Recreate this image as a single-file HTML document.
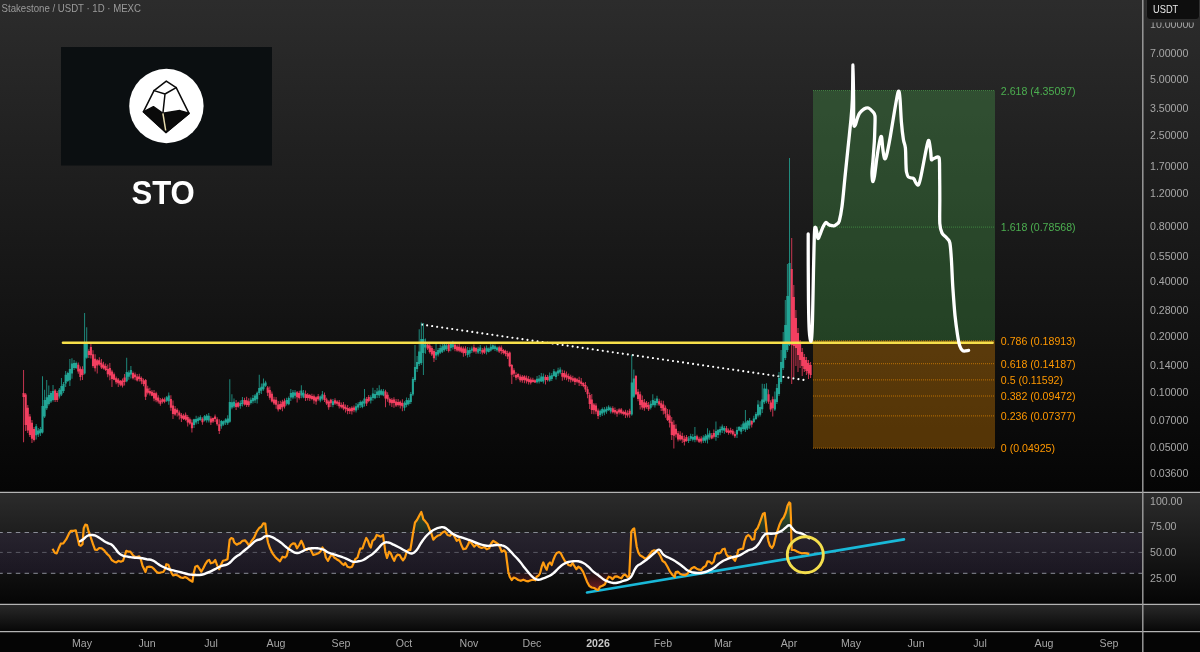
<!DOCTYPE html>
<html><head><meta charset="utf-8"><title>STO chart</title>
<style>html,body{margin:0;padding:0;background:#050505;overflow:hidden}svg{display:block;will-change:transform}svg text{-webkit-font-smoothing:antialiased}</style></head>
<body>
<svg width="1200" height="652" viewBox="0 0 1200 652" font-family="'Liberation Sans', sans-serif">
<defs>
<linearGradient id="gm" x1="0" y1="0" x2="0" y2="1"><stop offset="0" stop-color="#2c2c2c"/><stop offset="1" stop-color="#050505"/></linearGradient>
<linearGradient id="gr" x1="0" y1="0" x2="0" y2="1"><stop offset="0" stop-color="#2c2c2c"/><stop offset="1" stop-color="#050505"/></linearGradient>
<linearGradient id="g3" x1="0" y1="0" x2="0" y2="1"><stop offset="0" stop-color="#2a2a2a"/><stop offset="1" stop-color="#060606"/></linearGradient>
<linearGradient id="gob" gradientUnits="userSpaceOnUse" x1="0" y1="500" x2="0" y2="532.5"><stop offset="0" stop-color="#3a7d3c" stop-opacity="0.85"/><stop offset="1" stop-color="#2f6b32" stop-opacity="0.15"/></linearGradient>
<linearGradient id="gos" gradientUnits="userSpaceOnUse" x1="0" y1="573" x2="0" y2="592"><stop offset="0" stop-color="#7a1f25" stop-opacity="0.15"/><stop offset="1" stop-color="#9a262e" stop-opacity="0.85"/></linearGradient>
<linearGradient id="gband" gradientUnits="userSpaceOnUse" x1="0" y1="532.5" x2="0" y2="573"><stop offset="0" stop-color="#7e57c2" stop-opacity="0.10"/><stop offset="1" stop-color="#7e57c2" stop-opacity="0.10"/></linearGradient>
<clipPath id="cpTop"><rect x="1144" y="22.5" width="56" height="30"/></clipPath>
<clipPath id="above70"><rect x="0" y="493" width="1142" height="39.5"/></clipPath>
<clipPath id="below30"><rect x="0" y="573" width="1142" height="31"/></clipPath>
</defs>
<rect x="0" y="0" width="1200" height="492" fill="url(#gm)"/>
<rect x="0" y="492" width="1200" height="112" fill="url(#gr)"/>
<rect x="0" y="604" width="1200" height="28" fill="url(#g3)"/>
<rect x="0" y="632" width="1200" height="20" fill="#050505"/>
<rect x="813" y="90.5" width="182" height="250.3" fill="#4caf50" fill-opacity="0.31"/>
<rect x="813" y="340.8" width="182" height="107.4" fill="#ff9800" fill-opacity="0.31"/>
<line x1="813" x2="995" y1="90.5" y2="90.5" stroke="#4caf50" stroke-width="1" stroke-dasharray="1 1" stroke-opacity="0.6"/>
<text x="1000.8" y="94.56" font-size="10.6" fill="#4caf50">2.618 (4.35097)</text>
<line x1="813" x2="995" y1="227.1" y2="227.1" stroke="#4caf50" stroke-width="1" stroke-dasharray="1 1" stroke-opacity="0.6"/>
<text x="1000.8" y="231.20" font-size="10.6" fill="#4caf50">1.618 (0.78568)</text>
<line x1="813" x2="995" y1="340.8" y2="340.8" stroke="#ff9800" stroke-width="1" stroke-dasharray="1 1" stroke-opacity="0.6"/>
<text x="1000.8" y="344.88" font-size="10.6" fill="#ff9800">0.786 (0.18913)</text>
<line x1="813" x2="995" y1="363.7" y2="363.7" stroke="#ff9800" stroke-width="1" stroke-dasharray="1 1" stroke-opacity="0.6"/>
<text x="1000.8" y="367.84" font-size="10.6" fill="#ff9800">0.618 (0.14187)</text>
<line x1="813" x2="995" y1="379.9" y2="379.9" stroke="#ff9800" stroke-width="1" stroke-dasharray="1 1" stroke-opacity="0.6"/>
<text x="1000.8" y="383.96" font-size="10.6" fill="#ff9800">0.5 (0.11592)</text>
<line x1="813" x2="995" y1="396.0" y2="396.0" stroke="#ff9800" stroke-width="1" stroke-dasharray="1 1" stroke-opacity="0.6"/>
<text x="1000.8" y="400.09" font-size="10.6" fill="#ff9800">0.382 (0.09472)</text>
<line x1="813" x2="995" y1="415.9" y2="415.9" stroke="#ff9800" stroke-width="1" stroke-dasharray="1 1" stroke-opacity="0.6"/>
<text x="1000.8" y="420.04" font-size="10.6" fill="#ff9800">0.236 (0.07377)</text>
<line x1="813" x2="995" y1="448.2" y2="448.2" stroke="#ff9800" stroke-width="1" stroke-dasharray="1 1" stroke-opacity="0.6"/>
<text x="1000.8" y="452.30" font-size="10.6" fill="#ff9800">0 (0.04925)</text>
<line x1="422.1" y1="324.6" x2="808" y2="380.5" stroke="#ffffff" stroke-width="2.1" stroke-linecap="round" stroke-dasharray="0.01 5.06"/>
<path d="M35.69 424.0h1v15.5h-1zM37.79 428.0h1v9.0h-1zM39.90 427.0h1v9.0h-1zM42.00 376.3h1v57.2h-1zM44.11 389.7h1v28.3h-1zM46.21 380.0h1v30.0h-1zM48.31 385.5h1v20.0h-1zM50.42 391.0h1v12.0h-1zM52.52 385.0h1v16.5h-1zM58.84 388.0h1v10.5h-1zM60.94 378.0h1v18.0h-1zM63.05 382.0h1v11.0h-1zM65.15 371.1h1v16.0h-1zM67.25 371.8h1v10.1h-1zM69.36 359.1h1v26.9h-1zM71.46 358.3h1v20.4h-1zM73.57 359.9h1v10.1h-1zM75.67 361.4h1v7.5h-1zM84.09 312.9h1v61.5h-1zM86.20 327.3h1v31.5h-1zM126.18 357.8h1v24.5h-1zM128.29 370.4h1v9.3h-1zM130.39 366.1h1v12.3h-1zM166.17 395.9h1v6.2h-1zM168.27 392.4h1v12.3h-1zM193.52 418.7h1v9.3h-1zM195.63 415.8h1v8.7h-1zM197.73 416.5h1v7.4h-1zM199.84 415.3h1v5.5h-1zM204.05 415.1h1v6.4h-1zM206.15 414.1h1v8.5h-1zM208.26 413.0h1v9.5h-1zM220.88 420.0h1v8.8h-1zM222.99 420.5h1v5.3h-1zM225.09 418.2h1v6.7h-1zM227.20 415.3h1v9.6h-1zM229.30 379.2h1v43.5h-1zM231.41 394.3h1v15.0h-1zM233.51 398.6h1v9.4h-1zM239.82 400.5h1v8.3h-1zM241.93 396.9h1v9.5h-1zM250.35 397.5h1v7.1h-1zM252.45 394.9h1v8.6h-1zM254.56 393.9h1v9.2h-1zM256.66 391.6h1v11.8h-1zM258.76 374.7h1v20.3h-1zM260.87 383.6h1v10.5h-1zM262.97 378.6h1v12.2h-1zM265.08 380.8h1v6.1h-1zM286.12 397.7h1v7.7h-1zM288.23 396.5h1v8.8h-1zM290.33 389.1h1v11.9h-1zM292.44 390.0h1v9.3h-1zM294.54 390.0h1v8.4h-1zM300.85 385.2h1v13.1h-1zM302.96 389.9h1v8.3h-1zM319.79 395.6h1v6.7h-1zM321.90 391.0h1v9.4h-1zM332.42 398.9h1v8.3h-1zM355.57 403.1h1v9.3h-1zM357.68 402.3h1v7.4h-1zM359.78 400.6h1v7.4h-1zM361.88 400.5h1v7.7h-1zM363.99 389.1h1v17.4h-1zM370.30 395.2h1v8.3h-1zM372.41 387.8h1v13.0h-1zM374.51 390.1h1v9.1h-1zM376.62 388.1h1v9.8h-1zM378.72 385.2h1v12.9h-1zM380.82 389.0h1v6.6h-1zM382.93 389.1h1v7.2h-1zM403.97 401.3h1v9.4h-1zM406.08 397.6h1v9.6h-1zM408.18 397.9h1v7.6h-1zM410.29 392.0h1v12.0h-1zM412.39 377.0h1v19.0h-1zM414.50 345.0h1v37.0h-1zM416.60 356.0h1v16.0h-1zM418.71 329.3h1v36.7h-1zM420.81 322.4h1v42.6h-1zM422.91 323.0h1v52.0h-1zM425.02 338.5h1v15.2h-1zM435.54 342.6h1v17.4h-1zM437.65 348.0h1v8.5h-1zM439.75 344.5h1v9.5h-1zM441.86 343.5h1v9.5h-1zM443.96 342.5h1v9.0h-1zM446.06 343.0h1v8.0h-1zM450.27 342.7h1v8.6h-1zM452.38 340.8h1v8.7h-1zM467.11 346.9h1v10.5h-1zM469.21 347.6h1v9.3h-1zM471.32 346.6h1v6.5h-1zM477.63 346.8h1v7.1h-1zM479.74 344.9h1v9.0h-1zM486.05 345.6h1v8.8h-1zM488.15 347.6h1v5.0h-1zM490.26 344.0h1v7.5h-1zM492.36 344.2h1v5.8h-1zM494.47 344.6h1v6.5h-1zM496.57 346.6h1v5.2h-1zM536.56 376.0h1v7.6h-1zM538.66 375.1h1v8.3h-1zM540.77 372.9h1v9.1h-1zM542.87 373.6h1v10.0h-1zM549.18 372.5h1v9.3h-1zM551.29 373.0h1v7.9h-1zM553.39 368.9h1v7.8h-1zM555.50 371.0h1v8.5h-1zM557.60 367.7h1v8.4h-1zM559.71 367.2h1v7.0h-1zM599.69 409.4h1v7.6h-1zM601.80 407.5h1v8.5h-1zM603.90 406.9h1v8.3h-1zM606.01 406.6h1v7.2h-1zM608.11 405.3h1v5.7h-1zM610.22 406.6h1v6.8h-1zM631.26 354.7h1v61.0h-1zM633.36 369.5h1v28.4h-1zM650.20 400.7h1v8.7h-1zM652.31 394.3h1v12.1h-1zM654.41 398.5h1v9.0h-1zM656.51 395.7h1v9.7h-1zM688.08 436.2h1v6.9h-1zM690.19 433.8h1v7.1h-1zM692.29 434.0h1v7.6h-1zM694.40 426.9h1v15.3h-1zM702.81 435.3h1v7.8h-1zM704.92 433.9h1v8.9h-1zM707.02 428.2h1v15.2h-1zM709.13 430.6h1v9.1h-1zM715.44 421.6h1v19.2h-1zM717.54 428.9h1v9.2h-1zM719.65 426.5h1v8.7h-1zM721.75 424.5h1v8.4h-1zM723.86 426.0h1v7.7h-1zM736.49 426.7h1v11.2h-1zM738.59 426.1h1v5.1h-1zM740.69 424.4h1v9.9h-1zM742.80 421.2h1v9.8h-1zM744.90 409.9h1v22.0h-1zM747.01 419.9h1v10.2h-1zM749.11 418.1h1v10.7h-1zM753.32 415.8h1v7.2h-1zM755.43 412.0h1v8.1h-1zM757.53 400.2h1v17.4h-1zM759.64 401.2h1v15.3h-1zM761.74 383.8h1v29.2h-1zM763.84 384.0h1v20.0h-1zM765.95 383.3h1v19.9h-1zM774.37 391.6h1v19.3h-1zM776.40 384.0h1v20.0h-1zM778.50 372.0h1v24.0h-1zM780.60 350.0h1v34.0h-1zM782.70 332.0h1v38.0h-1zM784.80 300.0h1v60.0h-1zM786.90 264.0h1v88.0h-1zM789.00 158.0h1v188.0h-1z" fill="#22a595" fill-opacity="0.8"/>
<path d="M23.06 370.0h1v72.2h-1zM25.16 393.0h1v38.0h-1zM27.27 405.0h1v28.0h-1zM29.37 414.0h1v23.0h-1zM31.48 420.0h1v23.0h-1zM33.58 427.0h1v14.5h-1zM54.63 389.0h1v13.0h-1zM56.73 391.0h1v11.0h-1zM77.78 362.4h1v11.4h-1zM79.88 366.5h1v14.1h-1zM81.99 366.3h1v13.6h-1zM88.30 349.3h1v8.8h-1zM90.40 343.1h1v15.4h-1zM92.51 350.3h1v17.5h-1zM94.61 354.3h1v17.2h-1zM96.72 359.1h1v14.4h-1zM98.82 357.3h1v8.4h-1zM100.93 359.1h1v9.9h-1zM103.03 361.7h1v7.9h-1zM105.14 363.6h1v7.5h-1zM107.24 364.6h1v12.7h-1zM109.34 363.1h1v17.2h-1zM111.45 369.8h1v17.2h-1zM113.55 372.6h1v7.6h-1zM115.66 376.4h1v7.8h-1zM117.76 378.0h1v9.1h-1zM119.87 380.1h1v6.2h-1zM121.97 378.5h1v9.0h-1zM124.08 374.1h1v11.5h-1zM132.49 371.4h1v8.0h-1zM134.60 372.5h1v7.7h-1zM136.70 373.9h1v7.7h-1zM138.81 373.7h1v7.7h-1zM140.91 376.4h1v7.9h-1zM143.02 378.5h1v7.7h-1zM145.12 378.9h1v21.1h-1zM147.23 385.8h1v8.8h-1zM149.33 387.7h1v7.8h-1zM151.43 390.0h1v6.3h-1zM153.54 390.1h1v11.1h-1zM155.64 391.7h1v10.5h-1zM157.75 395.3h1v8.1h-1zM159.85 398.1h1v7.7h-1zM161.96 397.8h1v5.6h-1zM164.06 397.4h1v5.9h-1zM170.38 395.2h1v15.6h-1zM172.48 400.5h1v18.4h-1zM174.58 405.9h1v9.9h-1zM176.69 408.3h1v8.1h-1zM178.79 410.5h1v8.9h-1zM180.90 412.9h1v9.1h-1zM183.00 413.7h1v6.4h-1zM185.11 412.4h1v8.3h-1zM187.21 414.9h1v11.6h-1zM189.32 417.4h1v7.4h-1zM191.42 419.4h1v13.2h-1zM201.94 417.3h1v7.5h-1zM210.36 416.3h1v8.8h-1zM212.47 417.4h1v5.7h-1zM214.57 414.6h1v7.3h-1zM216.67 417.3h1v8.4h-1zM218.78 419.2h1v14.8h-1zM235.61 400.1h1v9.8h-1zM237.72 401.7h1v6.1h-1zM244.03 397.8h1v7.6h-1zM246.14 396.8h1v10.1h-1zM248.24 398.3h1v8.7h-1zM267.18 385.9h1v10.0h-1zM269.29 386.5h1v13.3h-1zM271.39 391.5h1v11.1h-1zM273.50 396.7h1v8.4h-1zM275.60 396.9h1v11.8h-1zM277.70 400.9h1v10.6h-1zM279.81 400.8h1v9.2h-1zM281.91 399.7h1v11.5h-1zM284.02 398.4h1v10.2h-1zM296.64 390.9h1v11.7h-1zM298.75 390.8h1v8.8h-1zM305.06 390.5h1v10.5h-1zM307.17 392.9h1v7.5h-1zM309.27 393.9h1v7.1h-1zM311.38 393.7h1v6.6h-1zM313.48 394.5h1v9.2h-1zM315.59 396.2h1v8.6h-1zM317.69 394.0h1v6.8h-1zM324.00 392.5h1v9.6h-1zM326.11 397.7h1v7.3h-1zM328.21 400.3h1v9.5h-1zM330.32 398.7h1v8.3h-1zM334.53 398.2h1v6.9h-1zM336.63 400.2h1v5.5h-1zM338.73 400.0h1v8.5h-1zM340.84 402.4h1v6.1h-1zM342.94 402.1h1v8.2h-1zM345.05 404.4h1v8.0h-1zM347.15 405.0h1v9.3h-1zM349.26 407.0h1v7.1h-1zM351.36 406.3h1v8.1h-1zM353.47 405.6h1v6.7h-1zM366.09 397.0h1v9.1h-1zM368.20 395.1h1v7.2h-1zM385.03 389.7h1v17.6h-1zM387.14 392.2h1v9.5h-1zM389.24 397.4h1v8.0h-1zM391.35 397.9h1v9.1h-1zM393.45 397.2h1v10.6h-1zM395.56 399.0h1v8.0h-1zM397.66 398.9h1v7.6h-1zM399.77 400.6h1v7.9h-1zM401.87 399.3h1v12.0h-1zM427.12 342.0h1v8.0h-1zM429.23 344.0h1v9.5h-1zM431.33 346.0h1v10.0h-1zM433.44 349.0h1v13.0h-1zM448.17 343.0h1v9.5h-1zM454.48 342.6h1v8.6h-1zM456.59 344.5h1v7.2h-1zM458.69 343.5h1v8.8h-1zM460.80 346.3h1v6.8h-1zM462.90 346.5h1v10.2h-1zM465.00 346.3h1v9.4h-1zM473.42 344.5h1v8.0h-1zM475.53 347.2h1v6.5h-1zM481.84 348.0h1v6.6h-1zM483.95 346.4h1v7.7h-1zM498.68 345.7h1v7.3h-1zM500.78 345.4h1v8.9h-1zM502.89 348.9h1v5.5h-1zM504.99 349.8h1v6.4h-1zM507.09 350.8h1v8.1h-1zM509.20 351.6h1v15.6h-1zM511.30 364.1h1v19.8h-1zM513.41 368.2h1v8.7h-1zM515.51 372.3h1v7.9h-1zM517.62 373.2h1v6.1h-1zM519.72 374.4h1v7.9h-1zM521.83 374.9h1v7.9h-1zM523.93 375.2h1v8.1h-1zM526.04 375.5h1v7.9h-1zM528.14 376.0h1v8.5h-1zM530.24 377.4h1v7.0h-1zM532.35 377.7h1v4.9h-1zM534.45 379.2h1v3.7h-1zM544.98 374.8h1v9.6h-1zM547.08 375.0h1v6.6h-1zM561.81 369.7h1v11.0h-1zM563.92 370.4h1v9.4h-1zM566.02 371.6h1v8.6h-1zM568.13 373.6h1v8.2h-1zM570.23 374.8h1v7.6h-1zM572.33 375.8h1v6.3h-1zM574.44 377.2h1v7.7h-1zM576.54 378.1h1v5.2h-1zM578.65 376.7h1v9.2h-1zM580.75 378.1h1v8.0h-1zM582.86 382.2h1v5.0h-1zM584.96 382.1h1v10.0h-1zM587.07 386.4h1v11.9h-1zM589.17 392.4h1v16.6h-1zM591.27 394.1h1v19.8h-1zM593.38 403.1h1v11.2h-1zM595.48 403.2h1v11.1h-1zM597.59 408.6h1v10.5h-1zM612.32 406.2h1v7.4h-1zM614.42 407.5h1v7.0h-1zM616.53 409.3h1v7.5h-1zM618.63 408.2h1v6.4h-1zM620.74 408.1h1v6.4h-1zM622.84 410.5h1v5.0h-1zM624.95 409.8h1v8.1h-1zM627.05 410.3h1v7.2h-1zM629.16 408.8h1v8.9h-1zM635.47 375.0h1v20.2h-1zM637.57 389.0h1v12.2h-1zM639.68 391.6h1v17.9h-1zM641.78 395.5h1v14.2h-1zM643.89 399.0h1v11.7h-1zM645.99 401.0h1v7.8h-1zM648.10 402.1h1v8.9h-1zM658.62 398.7h1v7.2h-1zM660.72 400.4h1v10.7h-1zM662.83 400.8h1v13.6h-1zM664.93 405.4h1v12.3h-1zM667.04 409.1h1v11.8h-1zM669.14 409.5h1v18.1h-1zM671.25 416.9h1v23.2h-1zM673.35 420.3h1v28.2h-1zM675.45 424.2h1v13.4h-1zM677.56 430.9h1v10.5h-1zM679.66 431.2h1v9.6h-1zM681.77 432.8h1v10.2h-1zM683.87 435.5h1v9.9h-1zM685.98 435.1h1v6.7h-1zM696.50 434.8h1v6.6h-1zM698.60 436.8h1v6.2h-1zM700.71 436.2h1v7.4h-1zM711.23 433.1h1v6.2h-1zM713.34 429.5h1v9.0h-1zM725.96 426.1h1v7.0h-1zM728.07 428.6h1v6.1h-1zM730.17 427.7h1v6.5h-1zM732.28 428.9h1v6.6h-1zM734.38 431.4h1v6.6h-1zM751.22 420.3h1v7.2h-1zM768.05 389.4h1v14.4h-1zM770.16 400.2h1v11.5h-1zM772.26 396.4h1v20.0h-1zM791.20 238.0h1v146.0h-1zM793.30 285.0h1v92.0h-1zM795.40 310.0h1v56.0h-1zM797.50 328.0h1v44.0h-1zM799.60 340.0h1v28.0h-1zM801.70 348.0h1v28.0h-1zM803.80 354.0h1v18.0h-1zM805.90 357.0h1v18.0h-1zM808.00 360.0h1v19.0h-1zM810.10 362.0h1v16.0h-1z" fill="#f23f60" fill-opacity="0.8"/>
<path d="M35.14 426.3h2.1v9.0h-2.1zM37.24 430.4h2.1v4.2h-2.1zM39.35 429.0h2.1v4.2h-2.1zM41.45 406.0h2.1v26.5h-2.1zM43.56 400.0h2.1v16.6h-2.1zM45.66 397.3h2.1v11.0h-2.1zM47.76 395.0h2.1v9.0h-2.1zM49.87 393.0h2.1v8.4h-2.1zM51.97 391.0h2.1v9.0h-2.1zM58.29 389.7h2.1v6.9h-2.1zM60.39 386.0h2.1v8.5h-2.1zM62.50 384.0h2.1v7.0h-2.1zM64.60 374.8h2.1v8.7h-2.1zM66.70 373.0h2.1v8.0h-2.1zM68.81 368.9h2.1v11.3h-2.1zM70.91 363.5h2.1v10.1h-2.1zM73.02 363.0h2.1v5.1h-2.1zM75.12 363.1h2.1v5.0h-2.1zM83.54 342.1h2.1v31.3h-2.1zM85.65 342.1h2.1v15.6h-2.1zM125.63 372.1h2.1v9.1h-2.1zM127.74 372.5h2.1v4.2h-2.1zM129.84 370.1h2.1v4.4h-2.1zM165.62 397.3h2.1v3.5h-2.1zM167.72 395.5h2.1v5.8h-2.1zM192.97 419.3h2.1v5.7h-2.1zM195.08 419.0h2.1v3.6h-2.1zM197.18 418.3h2.1v2.7h-2.1zM199.29 416.9h2.1v3.0h-2.1zM203.50 416.2h2.1v4.4h-2.1zM205.60 415.6h2.1v4.6h-2.1zM207.71 415.8h2.1v4.8h-2.1zM220.33 421.0h2.1v5.3h-2.1zM222.44 421.3h2.1v3.3h-2.1zM224.54 419.5h2.1v3.0h-2.1zM226.65 418.6h2.1v4.6h-2.1zM228.75 402.1h2.1v19.6h-2.1zM230.86 402.3h2.1v5.2h-2.1zM232.96 401.7h2.1v4.8h-2.1zM239.27 403.0h2.1v3.0h-2.1zM241.38 400.1h2.1v4.0h-2.1zM249.80 399.8h2.1v3.2h-2.1zM251.90 397.9h2.1v3.3h-2.1zM254.01 395.6h2.1v4.8h-2.1zM256.11 392.7h2.1v6.6h-2.1zM258.21 387.9h2.1v5.2h-2.1zM260.32 386.7h2.1v4.1h-2.1zM262.42 383.5h2.1v5.8h-2.1zM264.53 382.6h2.1v3.1h-2.1zM285.57 400.1h2.1v3.6h-2.1zM287.68 398.1h2.1v6.2h-2.1zM289.78 392.9h2.1v4.7h-2.1zM291.89 392.2h2.1v5.4h-2.1zM293.99 392.6h2.1v3.2h-2.1zM300.30 390.6h2.1v5.0h-2.1zM302.41 392.7h2.1v4.8h-2.1zM319.24 396.4h2.1v4.2h-2.1zM321.35 394.3h2.1v4.5h-2.1zM331.87 401.3h2.1v3.7h-2.1zM355.02 406.3h2.1v4.2h-2.1zM357.13 404.2h2.1v3.4h-2.1zM359.23 401.9h2.1v3.4h-2.1zM361.33 401.6h2.1v5.3h-2.1zM363.44 398.4h2.1v5.1h-2.1zM369.75 397.3h2.1v3.3h-2.1zM371.86 393.6h2.1v4.5h-2.1zM373.96 393.9h2.1v4.4h-2.1zM376.07 391.5h2.1v3.4h-2.1zM378.17 390.6h2.1v5.0h-2.1zM380.27 390.4h2.1v4.3h-2.1zM382.38 391.3h2.1v4.1h-2.1zM403.42 402.7h2.1v5.1h-2.1zM405.53 399.9h2.1v5.0h-2.1zM407.63 400.2h2.1v3.8h-2.1zM409.74 394.0h2.1v8.0h-2.1zM411.84 379.0h2.1v15.5h-2.1zM413.95 367.0h2.1v13.0h-2.1zM416.05 362.0h2.1v7.0h-2.1zM418.16 351.4h2.1v12.6h-2.1zM420.26 339.0h2.1v24.0h-2.1zM422.36 339.0h2.1v14.0h-2.1zM424.47 344.5h2.1v3.0h-2.1zM434.99 352.0h2.1v3.5h-2.1zM437.10 350.0h2.1v4.6h-2.1zM439.20 348.0h2.1v4.8h-2.1zM441.31 346.3h2.1v5.5h-2.1zM443.41 344.5h2.1v5.5h-2.1zM445.51 345.4h2.1v3.6h-2.1zM449.72 343.7h2.1v4.2h-2.1zM451.83 344.3h2.1v3.0h-2.1zM466.56 350.2h2.1v4.9h-2.1zM468.66 349.9h2.1v3.6h-2.1zM470.77 348.4h2.1v2.4h-2.1zM477.08 348.7h2.1v3.7h-2.1zM479.19 347.6h2.1v3.5h-2.1zM485.50 347.7h2.1v3.7h-2.1zM487.60 348.4h2.1v3.5h-2.1zM489.71 346.8h2.1v3.8h-2.1zM491.81 345.2h2.1v3.8h-2.1zM493.92 346.2h2.1v2.7h-2.1zM496.02 347.6h2.1v2.7h-2.1zM536.01 378.7h2.1v3.5h-2.1zM538.11 378.4h2.1v3.2h-2.1zM540.22 376.6h2.1v4.8h-2.1zM542.32 376.6h2.1v4.9h-2.1zM548.63 375.7h2.1v5.1h-2.1zM550.74 375.2h2.1v3.9h-2.1zM552.84 371.2h2.1v4.9h-2.1zM554.95 372.2h2.1v4.7h-2.1zM557.05 370.4h2.1v3.2h-2.1zM559.16 369.6h2.1v3.0h-2.1zM599.14 410.7h2.1v4.3h-2.1zM601.25 409.0h2.1v4.5h-2.1zM603.35 409.4h2.1v3.2h-2.1zM605.46 408.8h2.1v2.7h-2.1zM607.56 406.8h2.1v3.2h-2.1zM609.67 408.0h2.1v3.4h-2.1zM630.71 382.5h2.1v32.1h-2.1zM632.81 378.6h2.1v18.2h-2.1zM649.65 403.8h2.1v3.9h-2.1zM651.76 400.1h2.1v4.9h-2.1zM653.86 401.1h2.1v4.2h-2.1zM655.96 398.5h2.1v4.6h-2.1zM687.53 438.4h2.1v2.7h-2.1zM689.64 435.9h2.1v2.9h-2.1zM691.74 437.1h2.1v2.7h-2.1zM693.85 435.9h2.1v3.9h-2.1zM702.26 437.5h2.1v3.3h-2.1zM704.37 435.8h2.1v4.9h-2.1zM706.47 434.7h2.1v4.8h-2.1zM708.58 433.3h2.1v4.2h-2.1zM714.89 431.0h2.1v5.9h-2.1zM716.99 430.1h2.1v5.0h-2.1zM719.10 429.1h2.1v3.3h-2.1zM721.20 426.6h2.1v3.7h-2.1zM723.31 428.1h2.1v2.7h-2.1zM735.94 430.1h2.1v4.3h-2.1zM738.04 427.1h2.1v3.5h-2.1zM740.14 427.3h2.1v4.5h-2.1zM742.25 423.4h2.1v5.6h-2.1zM744.35 422.6h2.1v7.2h-2.1zM746.46 421.0h2.1v7.5h-2.1zM748.56 420.3h2.1v5.3h-2.1zM752.77 418.4h2.1v3.6h-2.1zM754.88 414.0h2.1v4.9h-2.1zM756.98 404.5h2.1v11.0h-2.1zM759.09 407.1h2.1v7.7h-2.1zM761.19 399.4h2.1v9.8h-2.1zM763.29 388.4h2.1v13.9h-2.1zM765.40 388.8h2.1v12.0h-2.1zM773.82 399.3h2.1v10.3h-2.1zM775.85 388.0h2.1v14.0h-2.1zM777.95 378.0h2.1v16.0h-2.1zM780.05 362.0h2.1v20.0h-2.1zM782.15 342.0h2.1v26.0h-2.1zM784.25 325.0h2.1v33.0h-2.1zM786.35 296.0h2.1v54.0h-2.1zM788.45 263.0h2.1v82.0h-2.1z" fill="#22a595"/>
<path d="M22.51 393.0h2.1v4.0h-2.1zM24.61 394.5h2.1v30.5h-2.1zM26.72 407.7h2.1v22.7h-2.1zM28.82 416.6h2.1v18.4h-2.1zM30.93 422.8h2.1v15.9h-2.1zM33.03 429.0h2.1v11.0h-2.1zM54.08 390.4h2.1v9.6h-2.1zM56.18 393.0h2.1v7.0h-2.1zM77.23 364.7h2.1v6.8h-2.1zM79.33 368.7h2.1v8.3h-2.1zM81.44 369.3h2.1v5.7h-2.1zM87.75 350.9h2.1v4.0h-2.1zM89.85 346.9h2.1v8.4h-2.1zM91.96 354.2h2.1v11.8h-2.1zM94.06 358.8h2.1v9.5h-2.1zM96.17 360.2h2.1v5.3h-2.1zM98.27 360.2h2.1v4.2h-2.1zM100.38 362.8h2.1v4.6h-2.1zM102.48 364.4h2.1v4.1h-2.1zM104.59 365.9h2.1v4.2h-2.1zM106.69 368.9h2.1v5.4h-2.1zM108.79 368.0h2.1v7.6h-2.1zM110.90 371.6h2.1v7.5h-2.1zM113.00 374.2h2.1v5.5h-2.1zM115.11 378.3h2.1v3.9h-2.1zM117.21 379.4h2.1v3.8h-2.1zM119.32 380.8h2.1v4.0h-2.1zM121.42 380.5h2.1v5.3h-2.1zM123.53 377.4h2.1v4.7h-2.1zM131.94 373.1h2.1v5.2h-2.1zM134.05 374.5h2.1v2.8h-2.1zM136.15 376.5h2.1v4.1h-2.1zM138.26 376.5h2.1v2.5h-2.1zM140.36 378.0h2.1v3.3h-2.1zM142.47 380.4h2.1v3.6h-2.1zM144.57 379.9h2.1v16.9h-2.1zM146.68 388.4h2.1v4.3h-2.1zM148.78 390.9h2.1v2.6h-2.1zM150.88 391.8h2.1v4.0h-2.1zM152.99 393.1h2.1v5.4h-2.1zM155.09 393.3h2.1v7.0h-2.1zM157.20 397.5h2.1v4.0h-2.1zM159.30 400.6h2.1v3.2h-2.1zM161.41 399.0h2.1v2.7h-2.1zM163.51 399.6h2.1v2.1h-2.1zM169.83 398.9h2.1v8.8h-2.1zM171.93 405.4h2.1v8.6h-2.1zM174.03 408.8h2.1v5.6h-2.1zM176.14 409.8h2.1v3.0h-2.1zM178.24 412.4h2.1v3.2h-2.1zM180.35 414.8h2.1v3.4h-2.1zM182.45 415.7h2.1v3.2h-2.1zM184.56 414.7h2.1v5.1h-2.1zM186.66 417.0h2.1v5.4h-2.1zM188.77 419.2h2.1v4.3h-2.1zM190.87 422.6h2.1v5.7h-2.1zM201.39 418.8h2.1v3.4h-2.1zM209.81 418.6h2.1v3.8h-2.1zM211.92 418.0h2.1v3.4h-2.1zM214.02 416.4h2.1v2.6h-2.1zM216.12 419.3h2.1v5.0h-2.1zM218.23 424.3h2.1v6.7h-2.1zM235.06 403.3h2.1v3.7h-2.1zM237.17 402.5h2.1v4.2h-2.1zM243.48 400.1h2.1v4.4h-2.1zM245.59 400.3h2.1v4.6h-2.1zM247.69 401.3h2.1v4.0h-2.1zM266.63 387.5h2.1v5.3h-2.1zM268.74 390.1h2.1v7.6h-2.1zM270.84 393.7h2.1v7.7h-2.1zM272.95 399.4h2.1v4.2h-2.1zM275.05 399.8h2.1v5.0h-2.1zM277.15 404.4h2.1v5.0h-2.1zM279.26 404.0h2.1v5.0h-2.1zM281.36 401.7h2.1v5.5h-2.1zM283.47 400.7h2.1v5.7h-2.1zM296.09 392.2h2.1v5.0h-2.1zM298.20 392.9h2.1v5.1h-2.1zM304.51 394.0h2.1v4.1h-2.1zM306.62 394.6h2.1v3.5h-2.1zM308.72 394.9h2.1v3.6h-2.1zM310.83 396.0h2.1v2.9h-2.1zM312.93 396.2h2.1v4.2h-2.1zM315.04 397.3h2.1v4.3h-2.1zM317.14 396.3h2.1v3.0h-2.1zM323.45 394.9h2.1v5.1h-2.1zM325.56 399.5h2.1v4.0h-2.1zM327.66 401.6h2.1v5.6h-2.1zM329.77 399.8h2.1v3.4h-2.1zM333.98 400.2h2.1v3.4h-2.1zM336.08 401.5h2.1v2.3h-2.1zM338.18 402.3h2.1v3.9h-2.1zM340.29 404.9h2.1v2.4h-2.1zM342.39 404.5h2.1v4.1h-2.1zM344.50 406.7h2.1v2.5h-2.1zM346.60 408.0h2.1v3.0h-2.1zM348.71 408.6h2.1v2.7h-2.1zM350.81 407.8h2.1v3.4h-2.1zM352.92 407.4h2.1v2.8h-2.1zM365.54 398.9h2.1v4.6h-2.1zM367.65 397.1h2.1v3.9h-2.1zM384.48 391.4h2.1v7.1h-2.1zM386.59 394.7h2.1v4.6h-2.1zM388.69 399.1h2.1v3.6h-2.1zM390.80 399.7h2.1v3.6h-2.1zM392.90 399.4h2.1v3.7h-2.1zM395.01 401.6h2.1v3.9h-2.1zM397.11 402.1h2.1v2.9h-2.1zM399.22 401.7h2.1v3.8h-2.1zM401.32 402.9h2.1v3.3h-2.1zM426.57 344.5h2.1v4.0h-2.1zM428.68 345.5h2.1v6.5h-2.1zM430.78 348.0h2.1v6.6h-2.1zM432.89 351.0h2.1v7.3h-2.1zM447.62 344.5h2.1v6.5h-2.1zM453.93 344.8h2.1v4.3h-2.1zM456.04 346.5h2.1v3.9h-2.1zM458.14 346.7h2.1v4.0h-2.1zM460.25 347.6h2.1v4.2h-2.1zM462.35 348.5h2.1v4.8h-2.1zM464.45 348.5h2.1v4.5h-2.1zM472.87 347.3h2.1v4.1h-2.1zM474.98 347.9h2.1v3.6h-2.1zM481.29 350.0h2.1v2.5h-2.1zM483.40 348.6h2.1v4.2h-2.1zM498.13 347.2h2.1v4.4h-2.1zM500.23 347.6h2.1v3.5h-2.1zM502.34 350.1h2.1v2.8h-2.1zM504.44 351.1h2.1v2.8h-2.1zM506.54 353.2h2.1v3.3h-2.1zM508.65 352.6h2.1v13.6h-2.1zM510.75 365.1h2.1v9.6h-2.1zM512.86 370.2h2.1v3.6h-2.1zM514.96 374.9h2.1v2.8h-2.1zM517.07 374.1h2.1v3.1h-2.1zM519.17 376.4h2.1v3.9h-2.1zM521.28 376.7h2.1v3.8h-2.1zM523.38 376.3h2.1v3.8h-2.1zM525.49 377.8h2.1v3.5h-2.1zM527.59 379.0h2.1v3.1h-2.1zM529.69 379.6h2.1v3.2h-2.1zM531.80 379.7h2.1v2.4h-2.1zM533.90 380.3h2.1v2.2h-2.1zM544.43 377.0h2.1v3.1h-2.1zM546.53 377.1h2.1v2.9h-2.1zM561.26 373.1h2.1v3.6h-2.1zM563.37 373.0h2.1v4.4h-2.1zM565.47 374.5h2.1v3.1h-2.1zM567.58 376.1h2.1v2.9h-2.1zM569.68 376.8h2.1v3.0h-2.1zM571.78 378.3h2.1v2.5h-2.1zM573.89 378.3h2.1v3.7h-2.1zM575.99 379.3h2.1v2.5h-2.1zM578.10 379.9h2.1v2.9h-2.1zM580.20 381.4h2.1v2.5h-2.1zM582.31 383.0h2.1v3.0h-2.1zM584.41 385.0h2.1v4.5h-2.1zM586.52 389.2h2.1v5.0h-2.1zM588.62 394.9h2.1v9.0h-2.1zM590.72 399.5h2.1v10.4h-2.1zM592.83 404.5h2.1v5.8h-2.1zM594.93 405.5h2.1v6.0h-2.1zM597.04 410.4h2.1v5.6h-2.1zM611.77 408.2h2.1v4.0h-2.1zM613.87 410.1h2.1v2.4h-2.1zM615.98 411.3h2.1v2.5h-2.1zM618.08 409.6h2.1v2.9h-2.1zM620.19 409.5h2.1v3.8h-2.1zM622.29 411.7h2.1v2.3h-2.1zM624.40 411.8h2.1v2.9h-2.1zM626.50 413.3h2.1v2.3h-2.1zM628.61 410.7h2.1v3.6h-2.1zM634.92 376.0h2.1v18.2h-2.1zM637.02 391.8h2.1v7.2h-2.1zM639.13 394.2h2.1v10.9h-2.1zM641.23 400.0h2.1v7.5h-2.1zM643.34 402.2h2.1v6.1h-2.1zM645.44 402.7h2.1v4.3h-2.1zM647.55 405.0h2.1v4.2h-2.1zM658.07 401.2h2.1v3.2h-2.1zM660.17 403.3h2.1v4.7h-2.1zM662.28 404.4h2.1v6.3h-2.1zM664.38 407.7h2.1v6.1h-2.1zM666.49 414.0h2.1v5.9h-2.1zM668.59 415.6h2.1v7.1h-2.1zM670.70 421.7h2.1v13.3h-2.1zM672.80 424.8h2.1v10.9h-2.1zM674.90 428.8h2.1v5.6h-2.1zM677.01 433.2h2.1v6.3h-2.1zM679.11 434.8h2.1v4.6h-2.1zM681.22 436.1h2.1v3.5h-2.1zM683.32 438.7h2.1v3.2h-2.1zM685.43 437.1h2.1v4.0h-2.1zM695.95 436.2h2.1v3.5h-2.1zM698.05 438.8h2.1v2.9h-2.1zM700.16 438.4h2.1v3.2h-2.1zM710.68 435.2h2.1v3.3h-2.1zM712.79 433.0h2.1v3.8h-2.1zM725.41 428.2h2.1v3.9h-2.1zM727.52 430.4h2.1v2.5h-2.1zM729.62 430.2h2.1v2.4h-2.1zM731.73 430.7h2.1v3.6h-2.1zM733.83 434.0h2.1v2.3h-2.1zM750.67 420.9h2.1v3.5h-2.1zM767.50 394.3h2.1v7.5h-2.1zM769.61 402.6h2.1v7.0h-2.1zM771.71 399.2h2.1v9.0h-2.1zM790.65 269.0h2.1v76.0h-2.1zM792.75 297.0h2.1v49.0h-2.1zM794.85 318.0h2.1v30.0h-2.1zM796.95 333.0h2.1v22.0h-2.1zM799.05 344.0h2.1v16.0h-2.1zM801.15 352.0h2.1v14.0h-2.1zM803.25 357.0h2.1v12.0h-2.1zM805.35 360.0h2.1v11.0h-2.1zM807.45 363.0h2.1v10.5h-2.1zM809.55 365.0h2.1v10.0h-2.1z" fill="#f23f60"/>
<line x1="63" x2="992.6" y1="342.7" y2="342.7" stroke="#f7e04a" stroke-width="2.6" stroke-linecap="round"/>
<path d="M808.2 234.0 C808.2 242.4 808.2 275.6 808.4 290.0 C808.5 304.4 808.8 322.4 809.2 330.0 C809.6 337.6 810.7 342.5 811.2 341.0 C811.7 339.5 812.2 330.6 812.5 320.0 C812.8 309.4 813.2 283.2 813.5 270.0 C813.8 256.8 814.2 238.4 814.5 232.0 C814.8 225.6 815.2 227.7 815.5 227.5 C815.8 227.3 816.2 229.3 816.6 231.0 C817.0 232.7 817.5 237.9 818.0 238.5 C818.5 239.1 819.2 236.3 819.8 235.0 C820.4 233.7 821.2 231.3 821.8 229.8 C822.4 228.3 823.4 226.1 824.0 225.0 C824.6 223.9 825.3 222.6 826.0 222.5 C826.7 222.4 827.8 224.1 828.5 224.5 C829.2 224.9 829.8 225.2 830.6 225.4 C831.4 225.6 833.0 226.0 834.0 225.8 C835.0 225.6 836.2 224.7 837.0 224.0 C837.8 223.3 838.5 223.6 839.3 221.0 C840.0 218.4 841.1 213.1 842.0 206.5 C842.9 199.9 844.1 185.8 845.0 177.0 C845.9 168.2 847.1 156.7 848.0 148.0 C848.9 139.3 850.3 126.4 851.0 119.0 C851.7 111.6 852.1 106.8 852.4 98.7 C852.7 90.6 852.8 64.8 853.0 65.0 C853.2 65.2 853.5 91.2 853.6 100.0 C853.7 108.8 853.5 120.2 853.8 124.0 C854.1 127.8 854.7 125.9 855.3 125.0 C855.9 124.1 856.8 119.8 857.5 118.0 C858.2 116.2 858.7 114.3 859.7 113.0 C860.7 111.7 862.7 109.8 864.0 109.0 C865.3 108.2 867.2 107.6 868.5 108.0 C869.8 108.4 871.8 110.6 872.8 111.8 C873.8 113.0 874.7 113.3 875.0 116.0 C875.3 118.7 874.9 126.0 874.8 130.0 C874.7 134.0 874.6 137.9 874.3 142.4 C874.0 146.9 873.3 155.6 873.0 160.0 C872.7 164.4 872.1 168.7 872.0 171.5 C871.9 174.3 872.1 177.5 872.3 179.0 C872.4 180.5 872.7 181.9 873.0 181.5 C873.3 181.1 873.9 179.7 874.5 176.0 C875.1 172.3 876.2 162.5 877.0 157.0 C877.8 151.5 879.3 142.5 880.0 139.5 C880.7 136.5 881.2 135.7 881.6 137.0 C882.0 138.3 882.3 144.8 882.7 148.0 C883.1 151.2 883.9 157.3 884.5 158.4 C885.1 159.5 885.6 158.8 886.5 155.5 C887.4 152.2 889.1 143.4 890.3 136.6 C891.5 129.8 893.6 116.4 894.7 110.0 C895.8 103.6 897.0 96.8 897.6 94.0 C898.2 91.2 898.6 90.7 899.0 91.4 C899.4 92.1 899.6 94.1 900.0 98.7 C900.4 103.3 900.9 115.9 901.4 122.0 C901.9 128.1 902.8 135.6 903.4 139.5 C904.0 143.4 905.0 144.2 905.4 148.0 C905.8 151.8 905.8 161.4 906.0 165.0 C906.2 168.6 906.1 170.2 906.5 172.0 C906.9 173.8 907.6 176.1 908.4 177.0 C909.2 177.9 911.2 177.7 912.0 178.0 C912.8 178.3 913.4 178.2 914.0 179.0 C914.6 179.8 915.3 182.1 916.0 183.0 C916.7 183.9 917.7 185.8 918.4 185.0 C919.1 184.2 919.8 181.6 920.7 177.5 C921.6 173.4 923.5 163.2 924.5 158.0 C925.5 152.8 926.9 145.6 927.6 143.0 C928.3 140.4 928.5 139.8 929.0 141.0 C929.5 142.2 930.2 147.9 930.6 150.7 C931.0 153.5 931.0 158.3 931.4 159.5 C931.8 160.7 932.5 159.2 933.0 159.0 C933.5 158.8 934.1 158.2 935.0 158.0 C935.9 157.8 938.3 155.8 939.0 157.6 C939.7 159.4 939.5 163.6 939.6 170.0 C939.7 176.4 939.8 192.0 939.8 200.0 C939.8 208.0 939.5 218.6 939.8 223.5 C940.1 228.4 941.0 230.8 942.0 233.0 C943.0 235.2 945.5 236.5 946.7 238.0 C947.9 239.5 949.1 239.7 949.8 242.7 C950.5 245.7 950.8 251.1 951.3 258.0 C951.8 264.9 952.3 280.1 952.9 288.7 C953.5 297.3 954.3 308.6 955.0 315.5 C955.7 322.4 956.8 330.1 957.5 334.7 C958.2 339.3 959.0 343.6 959.8 346.0 C960.6 348.4 961.5 350.1 962.8 350.8 C964.1 351.5 967.7 350.5 968.6 350.4" fill="none" stroke="#ffffff" stroke-width="3.3" stroke-linejoin="round" stroke-linecap="round"/>
<rect x="61" y="47" width="211" height="118.5" fill="#0b0f11"/>
<circle cx="166.4" cy="106" r="37.2" fill="#ffffff"/>
<g stroke="#0a0a0a" stroke-width="1.5" stroke-linejoin="round" stroke-linecap="round" fill="none"><path d="M166.3 81.1 L154 90.6 L143.4 111.8 L166 132.4 L189 113.3 L176.2 87.6 Z"/><path d="M154 90.6 L165 94 L176.2 87.6 M165 94 L162.9 113.3"/><path d="M143.4 111.8 L153.4 106.7 L162.9 113.3 L179.8 110.6 L189 113.3 L166 132.4 Z" fill="#0a0a0a"/></g>
<path d="M162.9 113.3 L165.7 130.5" stroke="#e8dcae" stroke-width="1.5" fill="none"/>
<text x="131.4" y="204.3" font-size="33.6" font-weight="bold" fill="#ffffff" textLength="63.4" lengthAdjust="spacingAndGlyphs">STO</text>
<text x="1.6" y="12.3" font-size="10.2" fill="#9b9b9b" textLength="139.4" lengthAdjust="spacingAndGlyphs">Stakestone / USDT · 1D · MEXC</text>
<rect x="0" y="532.5" width="1142" height="40.8" fill="url(#gband)"/>
<line x1="0" x2="1142" y1="532.5" y2="532.5" stroke="#8a8c96" stroke-width="1" stroke-dasharray="4.5 4.27" stroke-dashoffset="1.73" stroke-opacity="1"/>
<line x1="0" x2="1142" y1="552.4" y2="552.4" stroke="#8a8c96" stroke-width="1" stroke-dasharray="4.5 4.27" stroke-dashoffset="1.73" stroke-opacity="0.55"/>
<line x1="0" x2="1142" y1="573.3" y2="573.3" stroke="#8a8c96" stroke-width="1" stroke-dasharray="4.5 4.27" stroke-dashoffset="1.73" stroke-opacity="1"/>
<path d="M52.5 548.7 L55.0 553.0 L56.7 553.3 L58.7 548.3 L60.8 543.7 L63.3 543.3 L66.3 539.2 L68.7 534.2 L70.8 530.8 L73.3 530.8 L75.8 530.3 L77.5 537.5 L79.2 545.0 L80.8 545.8 L82.5 544.2 L83.7 528.3 L85.3 524.7 L87.0 525.0 L88.7 531.7 L90.8 537.5 L93.0 544.2 L95.0 549.7 L97.0 550.0 L99.2 548.0 L101.7 548.3 L104.2 550.3 L106.7 553.7 L109.2 555.8 L111.7 560.0 L114.2 561.7 L116.3 562.5 L118.3 560.8 L120.8 561.7 L123.0 560.8 L124.7 555.8 L126.3 550.8 L128.3 551.7 L130.3 551.7 L132.5 554.7 L134.7 556.7 L136.7 557.0 L139.2 556.3 L140.8 559.2 L142.5 565.8 L144.2 569.2 L145.5 572.0 L147.0 567.0 L149.2 566.7 L151.7 567.0 L154.2 569.2 L156.7 572.0 L158.7 573.0 L160.8 572.5 L163.3 572.0 L165.0 569.2 L166.3 564.2 L168.3 564.7 L169.7 568.3 L171.7 573.3 L173.3 575.5 L175.8 574.7 L178.3 575.8 L180.8 577.5 L183.0 578.0 L185.0 577.0 L187.5 578.3 L190.0 580.3 L192.5 581.7 L193.7 573.3 L195.3 566.7 L197.5 565.8 L199.2 568.3 L201.3 571.7 L203.3 568.3 L205.3 564.2 L207.5 560.8 L209.2 560.0 L210.8 563.3 L213.3 562.5 L215.3 560.0 L217.0 565.0 L219.2 569.2 L220.8 565.0 L223.0 560.8 L225.0 560.3 L227.5 559.2 L228.7 548.3 L229.7 539.7 L231.3 538.0 L233.0 538.7 L234.2 542.5 L236.7 544.7 L239.2 543.3 L240.0 543.3 L242.5 540.8 L245.0 540.3 L247.5 543.3 L249.2 545.8 L251.7 540.8 L254.2 537.5 L256.7 531.7 L259.2 528.0 L261.3 526.7 L263.3 523.3 L265.3 523.7 L266.3 533.3 L268.0 542.5 L270.0 548.3 L272.5 553.3 L275.0 556.7 L277.5 559.2 L280.0 561.3 L282.5 556.7 L285.0 557.5 L286.7 555.8 L288.3 549.2 L290.8 545.0 L293.0 543.3 L295.0 543.7 L297.0 548.3 L299.2 545.0 L301.3 540.8 L303.0 544.2 L304.7 549.2 L306.7 550.0 L308.7 548.3 L310.8 550.0 L313.3 555.0 L315.8 554.2 L318.3 553.3 L320.3 551.7 L322.5 547.5 L324.2 550.0 L325.8 557.5 L328.0 560.8 L330.0 556.7 L332.0 554.2 L334.2 557.5 L336.7 559.2 L339.2 560.8 L341.7 563.3 L343.7 565.0 L345.3 563.0 L347.5 566.7 L350.0 567.5 L352.0 566.7 L353.7 563.0 L355.3 559.2 L357.5 557.5 L359.2 551.7 L360.3 548.7 L362.5 548.3 L364.2 543.3 L366.3 538.0 L368.0 540.8 L369.7 545.8 L370.8 547.5 L372.5 540.8 L374.7 539.2 L376.7 535.0 L378.7 535.8 L380.8 536.7 L383.0 535.0 L384.2 543.3 L385.3 551.7 L387.0 558.0 L389.2 551.7 L390.8 553.3 L392.5 557.5 L394.2 560.8 L395.8 556.7 L397.5 554.7 L399.7 555.0 L401.3 558.0 L403.0 560.3 L405.0 557.5 L406.7 551.7 L408.7 549.7 L410.3 550.0 L411.7 541.7 L413.3 531.7 L415.0 522.5 L417.0 520.0 L419.2 515.8 L421.3 512.0 L422.5 515.8 L423.3 519.2 L425.3 521.3 L427.5 524.2 L429.2 528.3 L431.3 533.3 L433.3 539.7 L435.3 537.5 L437.5 535.8 L440.0 535.0 L442.5 532.5 L445.0 531.3 L447.5 535.0 L450.0 535.8 L452.5 533.3 L455.0 537.5 L456.7 540.8 L459.2 539.2 L461.3 545.0 L463.3 549.2 L465.8 548.7 L468.0 544.7 L469.7 540.8 L471.7 543.3 L474.2 546.7 L476.7 544.2 L479.2 547.0 L481.7 548.0 L484.2 547.0 L486.7 549.2 L489.2 548.3 L491.3 543.3 L493.3 540.8 L495.8 542.5 L498.3 544.2 L500.0 547.5 L501.7 551.7 L504.2 550.3 L505.8 552.5 L507.0 561.7 L508.3 571.7 L509.7 576.7 L511.7 580.0 L513.7 577.5 L515.8 578.3 L518.3 580.0 L520.8 580.8 L523.3 579.7 L525.8 580.8 L528.3 581.3 L530.8 580.3 L533.3 579.7 L535.3 580.3 L536.7 576.7 L538.3 575.8 L540.0 573.3 L541.7 566.7 L543.3 562.5 L545.0 566.7 L546.7 569.7 L548.3 564.2 L550.0 562.5 L551.7 565.0 L553.3 560.0 L555.0 555.8 L556.7 553.0 L559.2 552.0 L560.8 553.3 L562.5 556.7 L564.7 560.8 L566.7 562.5 L568.3 565.0 L570.8 565.8 L572.5 563.0 L574.2 565.8 L576.3 569.2 L578.3 566.7 L580.8 568.3 L583.0 571.7 L585.0 576.7 L587.0 581.7 L589.2 585.8 L591.7 587.5 L594.2 588.0 L596.7 589.7 L598.3 590.0 L600.0 586.7 L602.5 585.8 L605.0 584.2 L606.7 580.0 L608.7 576.7 L610.8 577.5 L612.5 579.2 L614.7 576.7 L616.7 576.3 L619.2 577.5 L621.3 578.3 L623.3 575.3 L625.3 574.7 L627.5 577.0 L629.2 576.3 L630.3 553.3 L631.3 531.7 L633.0 529.2 L634.2 528.3 L635.3 536.7 L636.7 546.7 L638.3 552.5 L640.0 555.3 L642.5 556.7 L645.0 558.7 L647.5 557.5 L650.0 554.2 L652.0 551.3 L654.2 550.3 L656.3 550.8 L658.3 552.5 L660.3 555.8 L662.5 560.8 L665.0 562.5 L667.5 566.7 L670.0 571.7 L672.5 575.0 L674.7 577.0 L675.8 572.0 L678.0 571.7 L680.0 573.7 L682.5 574.7 L685.0 575.3 L687.5 573.7 L689.7 570.8 L691.7 568.3 L694.2 567.0 L696.7 568.7 L699.2 569.7 L701.3 570.0 L703.3 567.5 L705.8 565.8 L707.5 561.3 L709.7 561.7 L711.7 563.7 L713.7 561.7 L715.3 555.0 L717.0 553.0 L719.2 553.3 L720.8 552.5 L722.5 549.2 L724.7 548.7 L726.3 554.2 L728.3 557.0 L730.8 556.3 L733.0 558.3 L735.0 560.8 L736.7 556.7 L738.3 550.0 L740.3 549.2 L743.0 548.7 L744.7 540.8 L746.3 536.7 L748.3 535.0 L750.3 536.7 L752.0 539.7 L754.2 539.2 L755.3 530.8 L757.5 528.3 L759.2 524.2 L761.3 518.3 L763.0 513.7 L764.7 513.0 L765.8 522.5 L767.0 533.3 L768.3 540.8 L770.0 545.8 L772.0 548.0 L773.7 545.0 L775.3 538.3 L777.5 530.8 L779.7 524.2 L781.7 520.0 L783.7 517.5 L785.8 512.5 L787.5 505.8 L789.2 502.5 L790.3 503.3 L791.0 520.0 L791.3 536.7 L791.7 550.0 L794.2 550.0 L796.7 551.3 L799.2 552.5 L801.7 553.3 L804.2 553.0 L806.7 553.3 L809.2 554.2 L809.2 532.5 L52.5 532.5 Z" fill="url(#gob)" clip-path="url(#above70)"/>
<path d="M52.5 548.7 L55.0 553.0 L56.7 553.3 L58.7 548.3 L60.8 543.7 L63.3 543.3 L66.3 539.2 L68.7 534.2 L70.8 530.8 L73.3 530.8 L75.8 530.3 L77.5 537.5 L79.2 545.0 L80.8 545.8 L82.5 544.2 L83.7 528.3 L85.3 524.7 L87.0 525.0 L88.7 531.7 L90.8 537.5 L93.0 544.2 L95.0 549.7 L97.0 550.0 L99.2 548.0 L101.7 548.3 L104.2 550.3 L106.7 553.7 L109.2 555.8 L111.7 560.0 L114.2 561.7 L116.3 562.5 L118.3 560.8 L120.8 561.7 L123.0 560.8 L124.7 555.8 L126.3 550.8 L128.3 551.7 L130.3 551.7 L132.5 554.7 L134.7 556.7 L136.7 557.0 L139.2 556.3 L140.8 559.2 L142.5 565.8 L144.2 569.2 L145.5 572.0 L147.0 567.0 L149.2 566.7 L151.7 567.0 L154.2 569.2 L156.7 572.0 L158.7 573.0 L160.8 572.5 L163.3 572.0 L165.0 569.2 L166.3 564.2 L168.3 564.7 L169.7 568.3 L171.7 573.3 L173.3 575.5 L175.8 574.7 L178.3 575.8 L180.8 577.5 L183.0 578.0 L185.0 577.0 L187.5 578.3 L190.0 580.3 L192.5 581.7 L193.7 573.3 L195.3 566.7 L197.5 565.8 L199.2 568.3 L201.3 571.7 L203.3 568.3 L205.3 564.2 L207.5 560.8 L209.2 560.0 L210.8 563.3 L213.3 562.5 L215.3 560.0 L217.0 565.0 L219.2 569.2 L220.8 565.0 L223.0 560.8 L225.0 560.3 L227.5 559.2 L228.7 548.3 L229.7 539.7 L231.3 538.0 L233.0 538.7 L234.2 542.5 L236.7 544.7 L239.2 543.3 L240.0 543.3 L242.5 540.8 L245.0 540.3 L247.5 543.3 L249.2 545.8 L251.7 540.8 L254.2 537.5 L256.7 531.7 L259.2 528.0 L261.3 526.7 L263.3 523.3 L265.3 523.7 L266.3 533.3 L268.0 542.5 L270.0 548.3 L272.5 553.3 L275.0 556.7 L277.5 559.2 L280.0 561.3 L282.5 556.7 L285.0 557.5 L286.7 555.8 L288.3 549.2 L290.8 545.0 L293.0 543.3 L295.0 543.7 L297.0 548.3 L299.2 545.0 L301.3 540.8 L303.0 544.2 L304.7 549.2 L306.7 550.0 L308.7 548.3 L310.8 550.0 L313.3 555.0 L315.8 554.2 L318.3 553.3 L320.3 551.7 L322.5 547.5 L324.2 550.0 L325.8 557.5 L328.0 560.8 L330.0 556.7 L332.0 554.2 L334.2 557.5 L336.7 559.2 L339.2 560.8 L341.7 563.3 L343.7 565.0 L345.3 563.0 L347.5 566.7 L350.0 567.5 L352.0 566.7 L353.7 563.0 L355.3 559.2 L357.5 557.5 L359.2 551.7 L360.3 548.7 L362.5 548.3 L364.2 543.3 L366.3 538.0 L368.0 540.8 L369.7 545.8 L370.8 547.5 L372.5 540.8 L374.7 539.2 L376.7 535.0 L378.7 535.8 L380.8 536.7 L383.0 535.0 L384.2 543.3 L385.3 551.7 L387.0 558.0 L389.2 551.7 L390.8 553.3 L392.5 557.5 L394.2 560.8 L395.8 556.7 L397.5 554.7 L399.7 555.0 L401.3 558.0 L403.0 560.3 L405.0 557.5 L406.7 551.7 L408.7 549.7 L410.3 550.0 L411.7 541.7 L413.3 531.7 L415.0 522.5 L417.0 520.0 L419.2 515.8 L421.3 512.0 L422.5 515.8 L423.3 519.2 L425.3 521.3 L427.5 524.2 L429.2 528.3 L431.3 533.3 L433.3 539.7 L435.3 537.5 L437.5 535.8 L440.0 535.0 L442.5 532.5 L445.0 531.3 L447.5 535.0 L450.0 535.8 L452.5 533.3 L455.0 537.5 L456.7 540.8 L459.2 539.2 L461.3 545.0 L463.3 549.2 L465.8 548.7 L468.0 544.7 L469.7 540.8 L471.7 543.3 L474.2 546.7 L476.7 544.2 L479.2 547.0 L481.7 548.0 L484.2 547.0 L486.7 549.2 L489.2 548.3 L491.3 543.3 L493.3 540.8 L495.8 542.5 L498.3 544.2 L500.0 547.5 L501.7 551.7 L504.2 550.3 L505.8 552.5 L507.0 561.7 L508.3 571.7 L509.7 576.7 L511.7 580.0 L513.7 577.5 L515.8 578.3 L518.3 580.0 L520.8 580.8 L523.3 579.7 L525.8 580.8 L528.3 581.3 L530.8 580.3 L533.3 579.7 L535.3 580.3 L536.7 576.7 L538.3 575.8 L540.0 573.3 L541.7 566.7 L543.3 562.5 L545.0 566.7 L546.7 569.7 L548.3 564.2 L550.0 562.5 L551.7 565.0 L553.3 560.0 L555.0 555.8 L556.7 553.0 L559.2 552.0 L560.8 553.3 L562.5 556.7 L564.7 560.8 L566.7 562.5 L568.3 565.0 L570.8 565.8 L572.5 563.0 L574.2 565.8 L576.3 569.2 L578.3 566.7 L580.8 568.3 L583.0 571.7 L585.0 576.7 L587.0 581.7 L589.2 585.8 L591.7 587.5 L594.2 588.0 L596.7 589.7 L598.3 590.0 L600.0 586.7 L602.5 585.8 L605.0 584.2 L606.7 580.0 L608.7 576.7 L610.8 577.5 L612.5 579.2 L614.7 576.7 L616.7 576.3 L619.2 577.5 L621.3 578.3 L623.3 575.3 L625.3 574.7 L627.5 577.0 L629.2 576.3 L630.3 553.3 L631.3 531.7 L633.0 529.2 L634.2 528.3 L635.3 536.7 L636.7 546.7 L638.3 552.5 L640.0 555.3 L642.5 556.7 L645.0 558.7 L647.5 557.5 L650.0 554.2 L652.0 551.3 L654.2 550.3 L656.3 550.8 L658.3 552.5 L660.3 555.8 L662.5 560.8 L665.0 562.5 L667.5 566.7 L670.0 571.7 L672.5 575.0 L674.7 577.0 L675.8 572.0 L678.0 571.7 L680.0 573.7 L682.5 574.7 L685.0 575.3 L687.5 573.7 L689.7 570.8 L691.7 568.3 L694.2 567.0 L696.7 568.7 L699.2 569.7 L701.3 570.0 L703.3 567.5 L705.8 565.8 L707.5 561.3 L709.7 561.7 L711.7 563.7 L713.7 561.7 L715.3 555.0 L717.0 553.0 L719.2 553.3 L720.8 552.5 L722.5 549.2 L724.7 548.7 L726.3 554.2 L728.3 557.0 L730.8 556.3 L733.0 558.3 L735.0 560.8 L736.7 556.7 L738.3 550.0 L740.3 549.2 L743.0 548.7 L744.7 540.8 L746.3 536.7 L748.3 535.0 L750.3 536.7 L752.0 539.7 L754.2 539.2 L755.3 530.8 L757.5 528.3 L759.2 524.2 L761.3 518.3 L763.0 513.7 L764.7 513.0 L765.8 522.5 L767.0 533.3 L768.3 540.8 L770.0 545.8 L772.0 548.0 L773.7 545.0 L775.3 538.3 L777.5 530.8 L779.7 524.2 L781.7 520.0 L783.7 517.5 L785.8 512.5 L787.5 505.8 L789.2 502.5 L790.3 503.3 L791.0 520.0 L791.3 536.7 L791.7 550.0 L794.2 550.0 L796.7 551.3 L799.2 552.5 L801.7 553.3 L804.2 553.0 L806.7 553.3 L809.2 554.2 L809.2 573 L52.5 573 Z" fill="url(#gos)" clip-path="url(#below30)"/>
<line x1="587" y1="592.5" x2="904" y2="539.4" stroke="#19b8d8" stroke-width="2.6" stroke-linecap="round"/>
<path d="M52.5 548.7 L55.0 553.0 L56.7 553.3 L58.7 548.3 L60.8 543.7 L63.3 543.3 L66.3 539.2 L68.7 534.2 L70.8 530.8 L73.3 530.8 L75.8 530.3 L77.5 537.5 L79.2 545.0 L80.8 545.8 L82.5 544.2 L83.7 528.3 L85.3 524.7 L87.0 525.0 L88.7 531.7 L90.8 537.5 L93.0 544.2 L95.0 549.7 L97.0 550.0 L99.2 548.0 L101.7 548.3 L104.2 550.3 L106.7 553.7 L109.2 555.8 L111.7 560.0 L114.2 561.7 L116.3 562.5 L118.3 560.8 L120.8 561.7 L123.0 560.8 L124.7 555.8 L126.3 550.8 L128.3 551.7 L130.3 551.7 L132.5 554.7 L134.7 556.7 L136.7 557.0 L139.2 556.3 L140.8 559.2 L142.5 565.8 L144.2 569.2 L145.5 572.0 L147.0 567.0 L149.2 566.7 L151.7 567.0 L154.2 569.2 L156.7 572.0 L158.7 573.0 L160.8 572.5 L163.3 572.0 L165.0 569.2 L166.3 564.2 L168.3 564.7 L169.7 568.3 L171.7 573.3 L173.3 575.5 L175.8 574.7 L178.3 575.8 L180.8 577.5 L183.0 578.0 L185.0 577.0 L187.5 578.3 L190.0 580.3 L192.5 581.7 L193.7 573.3 L195.3 566.7 L197.5 565.8 L199.2 568.3 L201.3 571.7 L203.3 568.3 L205.3 564.2 L207.5 560.8 L209.2 560.0 L210.8 563.3 L213.3 562.5 L215.3 560.0 L217.0 565.0 L219.2 569.2 L220.8 565.0 L223.0 560.8 L225.0 560.3 L227.5 559.2 L228.7 548.3 L229.7 539.7 L231.3 538.0 L233.0 538.7 L234.2 542.5 L236.7 544.7 L239.2 543.3 L240.0 543.3 L242.5 540.8 L245.0 540.3 L247.5 543.3 L249.2 545.8 L251.7 540.8 L254.2 537.5 L256.7 531.7 L259.2 528.0 L261.3 526.7 L263.3 523.3 L265.3 523.7 L266.3 533.3 L268.0 542.5 L270.0 548.3 L272.5 553.3 L275.0 556.7 L277.5 559.2 L280.0 561.3 L282.5 556.7 L285.0 557.5 L286.7 555.8 L288.3 549.2 L290.8 545.0 L293.0 543.3 L295.0 543.7 L297.0 548.3 L299.2 545.0 L301.3 540.8 L303.0 544.2 L304.7 549.2 L306.7 550.0 L308.7 548.3 L310.8 550.0 L313.3 555.0 L315.8 554.2 L318.3 553.3 L320.3 551.7 L322.5 547.5 L324.2 550.0 L325.8 557.5 L328.0 560.8 L330.0 556.7 L332.0 554.2 L334.2 557.5 L336.7 559.2 L339.2 560.8 L341.7 563.3 L343.7 565.0 L345.3 563.0 L347.5 566.7 L350.0 567.5 L352.0 566.7 L353.7 563.0 L355.3 559.2 L357.5 557.5 L359.2 551.7 L360.3 548.7 L362.5 548.3 L364.2 543.3 L366.3 538.0 L368.0 540.8 L369.7 545.8 L370.8 547.5 L372.5 540.8 L374.7 539.2 L376.7 535.0 L378.7 535.8 L380.8 536.7 L383.0 535.0 L384.2 543.3 L385.3 551.7 L387.0 558.0 L389.2 551.7 L390.8 553.3 L392.5 557.5 L394.2 560.8 L395.8 556.7 L397.5 554.7 L399.7 555.0 L401.3 558.0 L403.0 560.3 L405.0 557.5 L406.7 551.7 L408.7 549.7 L410.3 550.0 L411.7 541.7 L413.3 531.7 L415.0 522.5 L417.0 520.0 L419.2 515.8 L421.3 512.0 L422.5 515.8 L423.3 519.2 L425.3 521.3 L427.5 524.2 L429.2 528.3 L431.3 533.3 L433.3 539.7 L435.3 537.5 L437.5 535.8 L440.0 535.0 L442.5 532.5 L445.0 531.3 L447.5 535.0 L450.0 535.8 L452.5 533.3 L455.0 537.5 L456.7 540.8 L459.2 539.2 L461.3 545.0 L463.3 549.2 L465.8 548.7 L468.0 544.7 L469.7 540.8 L471.7 543.3 L474.2 546.7 L476.7 544.2 L479.2 547.0 L481.7 548.0 L484.2 547.0 L486.7 549.2 L489.2 548.3 L491.3 543.3 L493.3 540.8 L495.8 542.5 L498.3 544.2 L500.0 547.5 L501.7 551.7 L504.2 550.3 L505.8 552.5 L507.0 561.7 L508.3 571.7 L509.7 576.7 L511.7 580.0 L513.7 577.5 L515.8 578.3 L518.3 580.0 L520.8 580.8 L523.3 579.7 L525.8 580.8 L528.3 581.3 L530.8 580.3 L533.3 579.7 L535.3 580.3 L536.7 576.7 L538.3 575.8 L540.0 573.3 L541.7 566.7 L543.3 562.5 L545.0 566.7 L546.7 569.7 L548.3 564.2 L550.0 562.5 L551.7 565.0 L553.3 560.0 L555.0 555.8 L556.7 553.0 L559.2 552.0 L560.8 553.3 L562.5 556.7 L564.7 560.8 L566.7 562.5 L568.3 565.0 L570.8 565.8 L572.5 563.0 L574.2 565.8 L576.3 569.2 L578.3 566.7 L580.8 568.3 L583.0 571.7 L585.0 576.7 L587.0 581.7 L589.2 585.8 L591.7 587.5 L594.2 588.0 L596.7 589.7 L598.3 590.0 L600.0 586.7 L602.5 585.8 L605.0 584.2 L606.7 580.0 L608.7 576.7 L610.8 577.5 L612.5 579.2 L614.7 576.7 L616.7 576.3 L619.2 577.5 L621.3 578.3 L623.3 575.3 L625.3 574.7 L627.5 577.0 L629.2 576.3 L630.3 553.3 L631.3 531.7 L633.0 529.2 L634.2 528.3 L635.3 536.7 L636.7 546.7 L638.3 552.5 L640.0 555.3 L642.5 556.7 L645.0 558.7 L647.5 557.5 L650.0 554.2 L652.0 551.3 L654.2 550.3 L656.3 550.8 L658.3 552.5 L660.3 555.8 L662.5 560.8 L665.0 562.5 L667.5 566.7 L670.0 571.7 L672.5 575.0 L674.7 577.0 L675.8 572.0 L678.0 571.7 L680.0 573.7 L682.5 574.7 L685.0 575.3 L687.5 573.7 L689.7 570.8 L691.7 568.3 L694.2 567.0 L696.7 568.7 L699.2 569.7 L701.3 570.0 L703.3 567.5 L705.8 565.8 L707.5 561.3 L709.7 561.7 L711.7 563.7 L713.7 561.7 L715.3 555.0 L717.0 553.0 L719.2 553.3 L720.8 552.5 L722.5 549.2 L724.7 548.7 L726.3 554.2 L728.3 557.0 L730.8 556.3 L733.0 558.3 L735.0 560.8 L736.7 556.7 L738.3 550.0 L740.3 549.2 L743.0 548.7 L744.7 540.8 L746.3 536.7 L748.3 535.0 L750.3 536.7 L752.0 539.7 L754.2 539.2 L755.3 530.8 L757.5 528.3 L759.2 524.2 L761.3 518.3 L763.0 513.7 L764.7 513.0 L765.8 522.5 L767.0 533.3 L768.3 540.8 L770.0 545.8 L772.0 548.0 L773.7 545.0 L775.3 538.3 L777.5 530.8 L779.7 524.2 L781.7 520.0 L783.7 517.5 L785.8 512.5 L787.5 505.8 L789.2 502.5 L790.3 503.3 L791.0 520.0 L791.3 536.7 L791.7 550.0 L794.2 550.0 L796.7 551.3 L799.2 552.5 L801.7 553.3 L804.2 553.0 L806.7 553.3 L809.2 554.2" fill="none" stroke="#ff9c10" stroke-width="2.2" stroke-linejoin="round"/>
<path d="M80.0 541.3 C80.9 540.8 81.3 540.6 83.3 539.2 C85.3 537.7 85.3 536.9 87.5 535.8 C89.7 534.7 89.4 535.0 91.7 535.0 C93.9 535.0 93.6 534.9 95.8 535.8 C98.1 536.7 97.8 536.9 100.0 538.3 C102.2 539.8 101.9 539.8 104.2 541.2 C106.4 542.5 106.3 542.4 108.3 543.3 C110.3 544.3 109.9 543.3 111.7 544.7 C113.4 546.0 113.0 546.0 115.0 548.3 C117.0 550.6 116.9 551.3 119.2 553.3 C121.4 555.3 120.9 554.9 123.3 555.8 C125.8 556.7 125.7 556.2 128.3 556.7 C131.0 557.1 130.2 557.1 133.3 557.5 C136.4 557.9 136.4 557.6 140.0 558.0 C143.6 558.4 143.3 558.5 146.7 559.2 C150.0 559.8 149.8 559.3 152.5 560.3 C155.2 561.4 154.2 561.4 156.7 563.0 C159.1 564.6 158.6 564.7 161.7 566.3 C164.8 568.0 164.8 568.0 168.3 569.2 C171.9 570.4 171.4 569.9 175.0 570.8 C178.6 571.7 178.1 571.6 181.7 572.5 C185.2 573.4 184.8 573.5 188.3 574.2 C191.9 574.8 191.4 574.9 195.0 575.0 C198.6 575.1 198.6 575.2 201.7 574.7 C204.8 574.1 204.0 574.0 206.7 573.0 C209.3 572.0 209.0 572.1 211.7 570.8 C214.3 569.6 214.0 569.7 216.7 568.3 C219.3 567.0 219.0 566.8 221.7 565.8 C224.3 564.9 224.4 565.6 226.7 564.7 C228.9 563.8 228.2 564.0 230.0 562.5 C231.8 561.0 231.6 560.8 233.3 559.2 C235.1 557.5 234.9 557.7 236.7 556.3 C238.4 555.0 237.8 555.9 240.0 554.2 C242.2 552.5 242.3 552.2 245.0 550.0 C247.7 547.8 247.1 548.3 250.0 545.8 C252.9 543.4 252.9 542.6 255.8 540.8 C258.7 539.1 258.2 540.4 260.8 539.2 C263.5 537.9 263.2 536.8 265.8 536.2 C268.5 535.5 268.2 535.9 270.8 536.7 C273.5 537.5 273.2 537.6 275.8 539.2 C278.5 540.7 278.2 540.5 280.8 542.5 C283.5 544.5 283.2 544.6 285.8 546.7 C288.5 548.8 287.9 548.6 290.8 550.3 C293.7 552.0 293.8 552.6 296.7 553.0 C299.6 553.4 299.0 552.7 301.7 551.7 C304.3 550.6 304.0 550.1 306.7 549.2 C309.3 548.3 308.8 548.6 311.7 548.3 C314.6 548.1 314.4 548.0 317.5 548.3 C320.6 548.7 320.4 548.6 323.3 549.7 C326.2 550.8 325.7 551.3 328.3 552.5 C331.0 553.7 330.7 553.3 333.3 554.2 C336.0 555.1 335.7 554.9 338.3 555.8 C341.0 556.7 340.7 556.5 343.3 557.5 C346.0 558.5 345.7 558.6 348.3 559.7 C351.0 560.8 350.7 561.2 353.3 561.7 C356.0 562.1 355.7 561.8 358.3 561.3 C361.0 560.9 360.7 561.2 363.3 560.0 C366.0 558.8 365.7 558.4 368.3 556.7 C371.0 554.9 370.7 555.6 373.3 553.3 C376.0 551.1 375.7 551.0 378.3 548.3 C381.0 545.7 380.7 544.9 383.3 543.3 C386.0 541.8 385.7 542.1 388.3 542.5 C391.0 542.9 390.7 543.5 393.3 544.7 C396.0 545.9 395.7 545.7 398.3 547.0 C401.0 548.3 400.7 548.2 403.3 549.7 C406.0 551.1 405.9 551.5 408.3 552.5 C410.8 553.5 410.3 554.0 412.5 553.3 C414.7 552.7 414.4 552.7 416.7 550.0 C418.9 547.3 418.6 546.7 420.8 543.3 C423.1 540.0 422.6 540.4 425.0 537.5 C427.4 534.6 427.3 534.7 430.0 532.5 C432.7 530.3 432.3 530.5 435.0 529.2 C437.7 527.8 437.6 527.9 440.0 527.5 C442.4 527.1 441.9 526.7 444.2 527.5 C446.4 528.3 446.1 528.7 448.3 530.3 C450.6 532.0 450.3 532.2 452.5 533.7 C454.7 535.1 454.2 534.8 456.7 535.8 C459.1 536.9 459.0 536.6 461.7 537.5 C464.3 538.4 464.0 538.3 466.7 539.2 C469.3 540.1 469.0 539.8 471.7 540.8 C474.3 541.9 474.0 542.0 476.7 543.0 C479.3 544.0 479.0 543.9 481.7 544.7 C484.3 545.4 484.0 545.6 486.7 545.8 C489.3 546.1 489.0 545.7 491.7 545.5 C494.3 545.3 494.0 545.0 496.7 545.0 C499.3 545.0 499.2 544.8 501.7 545.3 C504.1 545.9 503.6 545.5 505.8 547.0 C508.1 548.5 507.6 548.3 510.0 550.8 C512.4 553.3 512.3 553.4 515.0 556.3 C517.7 559.2 517.3 558.5 520.0 561.7 C522.7 564.9 522.3 565.0 525.0 568.3 C527.7 571.7 527.6 571.5 530.0 574.2 C532.4 576.8 531.9 576.9 534.2 578.3 C536.4 579.8 535.9 579.7 538.3 579.7 C540.8 579.7 540.7 579.2 543.3 578.3 C546.0 577.4 545.7 577.7 548.3 576.3 C551.0 575.0 550.7 575.5 553.3 573.3 C556.0 571.2 555.7 570.8 558.3 568.3 C561.0 565.9 560.7 565.9 563.3 564.2 C566.0 562.5 565.7 562.8 568.3 562.0 C571.0 561.2 570.7 561.5 573.3 561.3 C576.0 561.2 575.7 560.9 578.3 561.3 C581.0 561.8 580.7 561.6 583.3 563.0 C586.0 564.4 585.7 564.4 588.3 566.7 C591.0 569.0 590.7 569.4 593.3 571.7 C596.0 574.0 595.7 573.3 598.3 575.3 C601.0 577.3 600.7 577.5 603.3 579.2 C606.0 580.9 605.7 580.6 608.3 581.7 C611.0 582.7 610.7 582.8 613.3 583.0 C616.0 583.2 615.7 583.1 618.3 582.5 C621.0 581.9 620.7 581.7 623.3 580.8 C626.0 579.9 626.1 580.5 628.3 579.2 C630.6 577.8 629.9 578.5 631.7 575.8 C633.4 573.2 633.4 571.8 635.0 569.2 C636.6 566.5 636.2 567.2 637.5 565.8 C638.8 564.5 638.0 565.5 640.0 564.2 C642.0 562.8 642.3 562.8 645.0 560.8 C647.7 558.8 647.3 558.9 650.0 556.7 C652.7 554.4 652.6 554.4 655.0 552.5 C657.4 550.6 656.9 549.1 659.2 549.7 C661.4 550.2 660.9 552.6 663.3 554.7 C665.8 556.8 665.7 556.1 668.3 557.5 C671.0 558.9 670.7 558.4 673.3 560.0 C676.0 561.6 675.7 561.5 678.3 563.3 C681.0 565.2 680.7 565.0 683.3 567.0 C686.0 569.0 685.7 569.4 688.3 570.8 C691.0 572.3 690.7 571.9 693.3 572.5 C696.0 573.1 695.7 573.0 698.3 573.0 C701.0 573.0 700.7 573.1 703.3 572.5 C706.0 571.9 705.7 571.9 708.3 570.8 C711.0 569.7 710.7 570.1 713.3 568.3 C716.0 566.6 715.7 566.2 718.3 564.2 C721.0 562.2 720.7 562.3 723.3 560.8 C726.0 559.4 725.7 559.7 728.3 558.7 C731.0 557.6 730.7 557.8 733.3 557.0 C736.0 556.2 735.7 556.8 738.3 555.8 C741.0 554.9 740.7 554.8 743.3 553.3 C746.0 551.9 745.7 551.6 748.3 550.3 C751.0 549.1 750.7 550.3 753.3 548.7 C756.0 547.0 755.7 547.5 758.3 544.2 C761.0 540.9 761.1 539.1 763.3 536.3 C765.6 533.5 764.4 534.4 766.7 533.7 C768.9 533.0 769.0 533.8 771.7 533.7 C774.3 533.5 774.0 533.8 776.7 533.0 C779.3 532.2 779.2 532.3 781.7 530.8 C784.1 529.4 783.8 529.0 785.8 527.5 C787.8 526.0 787.6 525.3 789.2 525.3 C790.7 525.3 789.9 525.8 791.7 527.5 C793.4 529.2 793.6 530.2 795.8 531.7 C798.1 533.1 797.8 532.2 800.0 533.0 C802.2 533.8 801.7 533.2 804.2 534.7 C806.6 536.1 807.8 537.4 809.2 538.3" fill="none" stroke="#ffffff" stroke-width="2.4" stroke-linejoin="round" stroke-linecap="round"/>
<circle cx="805.3" cy="554.7" r="18" fill="none" stroke="#f5df4d" stroke-width="2.9"/>
<line x1="0" x2="1200" y1="492.3" y2="492.3" stroke="#b4b4b4" stroke-width="1.3"/>
<line x1="0" x2="1200" y1="604.4" y2="604.4" stroke="#b4b4b4" stroke-width="1.3"/>
<line x1="0" x2="1200" y1="631.7" y2="631.7" stroke="#b4b4b4" stroke-width="1.3"/>
<line x1="1142.8" x2="1142.8" y1="0" y2="652" stroke="#a0a0a0" stroke-width="1.4"/>
<text x="1150" y="28.08" font-size="10.6" fill="#a6a6a6" clip-path="url(#cpTop)">10.00000</text>
<text x="1150" y="56.55" font-size="10.6" fill="#a6a6a6">7.00000</text>
<text x="1150" y="83.41" font-size="10.6" fill="#a6a6a6">5.00000</text>
<text x="1150" y="111.88" font-size="10.6" fill="#a6a6a6">3.50000</text>
<text x="1150" y="138.74" font-size="10.6" fill="#a6a6a6">2.50000</text>
<text x="1150" y="169.53" font-size="10.6" fill="#a6a6a6">1.70000</text>
<text x="1150" y="197.34" font-size="10.6" fill="#a6a6a6">1.20000</text>
<text x="1150" y="229.71" font-size="10.6" fill="#a6a6a6">0.80000</text>
<text x="1150" y="259.62" font-size="10.6" fill="#a6a6a6">0.55000</text>
<text x="1150" y="285.04" font-size="10.6" fill="#a6a6a6">0.40000</text>
<text x="1150" y="313.51" font-size="10.6" fill="#a6a6a6">0.28000</text>
<text x="1150" y="340.37" font-size="10.6" fill="#a6a6a6">0.20000</text>
<text x="1150" y="368.85" font-size="10.6" fill="#a6a6a6">0.14000</text>
<text x="1150" y="395.71" font-size="10.6" fill="#a6a6a6">0.10000</text>
<text x="1150" y="424.18" font-size="10.6" fill="#a6a6a6">0.07000</text>
<text x="1150" y="451.04" font-size="10.6" fill="#a6a6a6">0.05000</text>
<text x="1150" y="477.27" font-size="10.6" fill="#a6a6a6">0.03600</text>
<text x="1150" y="504.6" font-size="10.6" fill="#a6a6a6">100.00</text>
<text x="1150" y="530.0" font-size="10.6" fill="#a6a6a6">75.00</text>
<text x="1150" y="555.7" font-size="10.6" fill="#a6a6a6">50.00</text>
<text x="1150" y="581.8" font-size="10.6" fill="#a6a6a6">25.00</text>
<rect x="1146.5" y="-4" width="53" height="23.6" rx="3.5" fill="#0e0e0e" stroke="#303030" stroke-width="1"/>
<text x="1153" y="12.8" font-size="10.4" fill="#e8e8e8" textLength="25.3" lengthAdjust="spacingAndGlyphs">USDT</text>
<text x="82" y="646.8" font-size="10.6" text-anchor="middle" fill="#a6a6a6">May</text>
<text x="147" y="646.8" font-size="10.6" text-anchor="middle" fill="#a6a6a6">Jun</text>
<text x="211" y="646.8" font-size="10.6" text-anchor="middle" fill="#a6a6a6">Jul</text>
<text x="276" y="646.8" font-size="10.6" text-anchor="middle" fill="#a6a6a6">Aug</text>
<text x="341" y="646.8" font-size="10.6" text-anchor="middle" fill="#a6a6a6">Sep</text>
<text x="404" y="646.8" font-size="10.6" text-anchor="middle" fill="#a6a6a6">Oct</text>
<text x="469" y="646.8" font-size="10.6" text-anchor="middle" fill="#a6a6a6">Nov</text>
<text x="532" y="646.8" font-size="10.6" text-anchor="middle" fill="#a6a6a6">Dec</text>
<text x="598" y="646.8" font-size="10.6" text-anchor="middle" font-weight="bold" fill="#c8c8c8">2026</text>
<text x="663" y="646.8" font-size="10.6" text-anchor="middle" fill="#a6a6a6">Feb</text>
<text x="723" y="646.8" font-size="10.6" text-anchor="middle" fill="#a6a6a6">Mar</text>
<text x="789" y="646.8" font-size="10.6" text-anchor="middle" fill="#a6a6a6">Apr</text>
<text x="851" y="646.8" font-size="10.6" text-anchor="middle" fill="#a6a6a6">May</text>
<text x="916" y="646.8" font-size="10.6" text-anchor="middle" fill="#a6a6a6">Jun</text>
<text x="980" y="646.8" font-size="10.6" text-anchor="middle" fill="#a6a6a6">Jul</text>
<text x="1044" y="646.8" font-size="10.6" text-anchor="middle" fill="#a6a6a6">Aug</text>
<text x="1109" y="646.8" font-size="10.6" text-anchor="middle" fill="#a6a6a6">Sep</text>
</svg>
</body></html>
